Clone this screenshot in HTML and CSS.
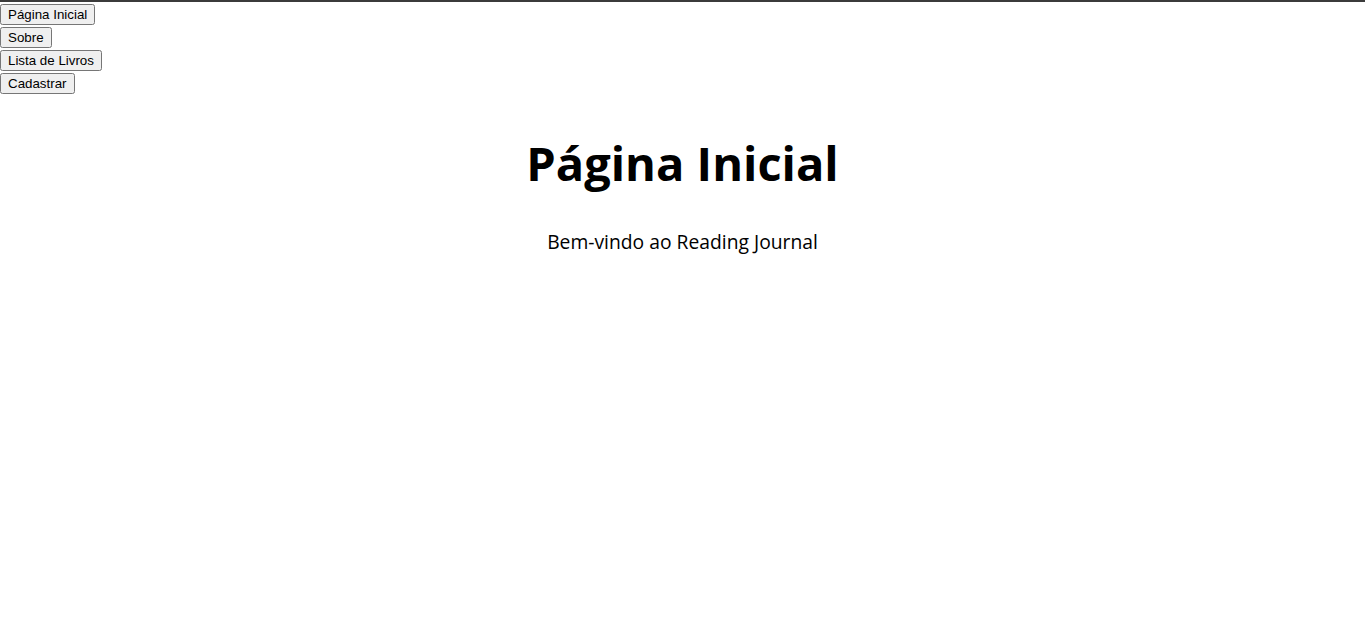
FILE: index.html
```html
<!DOCTYPE html>
<html lang="pt">
<head>
<meta charset="utf-8">
<title>Reading Journal</title>
<link rel="stylesheet" href="styles.css">
</head>
<body>
<nav class="nav">
  <button class="nav-btn">Página Inicial</button>
  <button class="nav-btn">Sobre</button>
  <button class="nav-btn">Lista de Livros</button>
  <button class="nav-btn">Cadastrar</button>
</nav>
<main class="home">
  <h1 class="home-title">Página Inicial</h1>
  <p class="home-text">Bem-vindo ao Reading Journal</p>
</main>
</body>
</html>
```
FILE: styles.css
```css
html, body {
  margin: 0;
  padding: 0;
  background: #ffffff;
}
body {
  border-top: 2px solid #3b3b3b;
  font-family: "Open Sans", "Noto Sans", sans-serif;
  color: #000;
}
.nav {
  display: flex;
  flex-direction: column;
  align-items: flex-start;
  gap: 2px;
  padding-top: 2px;
}
.nav-btn {
  font-family: "Liberation Sans", Arial, sans-serif;
  font-size: 13.333px;
  margin: 0;
}
.home {
  text-align: center;
}
.home-title {
  font-size: 47px;
  font-weight: 700;
  margin: 41px 0 0;
  line-height: 1.2;
}
.home-text {
  font-size: 19.3px;
  margin: 37px 0 0;
}
```
